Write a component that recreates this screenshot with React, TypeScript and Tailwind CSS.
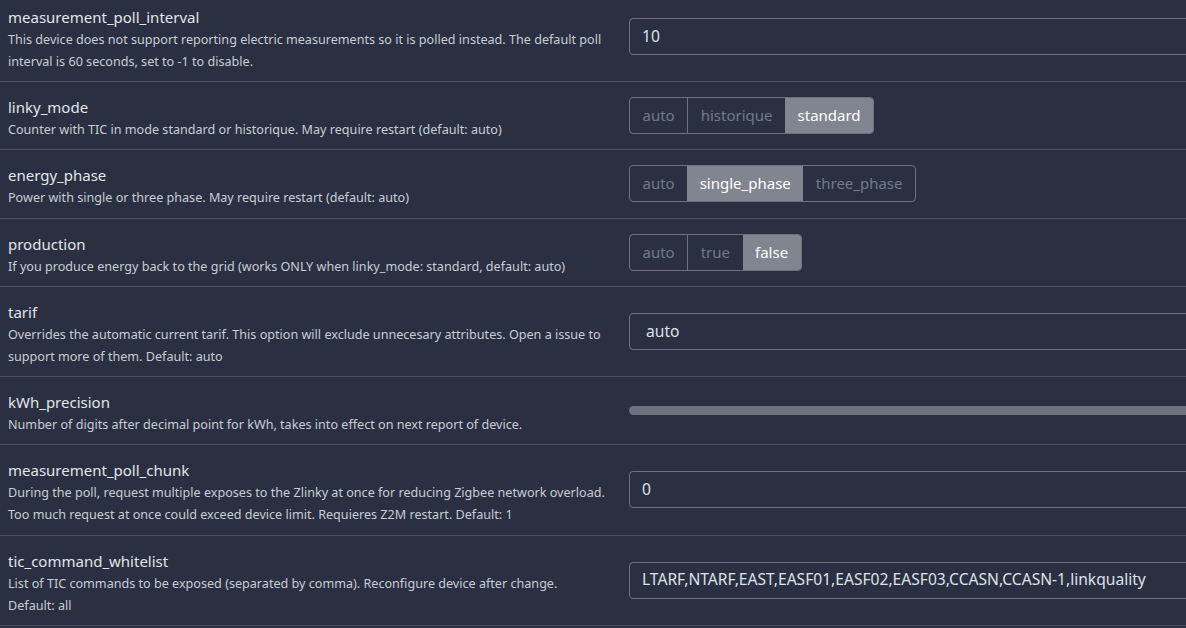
type Control =
  | { kind: "input"; value: string }
  | { kind: "select"; value: string }
  | { kind: "range" }
  | { kind: "toggle"; options: string[]; active: string };

interface Setting {
  name: string;
  description: string;
  control: Control;
}

const settings: Setting[] = [
  {
    name: "measurement_poll_interval",
    description:
      "This device does not support reporting electric measurements so it is polled instead. The default poll interval is 60 seconds, set to -1 to disable.",
    control: { kind: "input", value: "10" },
  },
  {
    name: "linky_mode",
    description: "Counter with TIC in mode standard or historique. May require restart (default: auto)",
    control: { kind: "toggle", options: ["auto", "historique", "standard"], active: "standard" },
  },
  {
    name: "energy_phase",
    description: "Power with single or three phase. May require restart (default: auto)",
    control: { kind: "toggle", options: ["auto", "single_phase", "three_phase"], active: "single_phase" },
  },
  {
    name: "production",
    description: "If you produce energy back to the grid (works ONLY when linky_mode: standard, default: auto)",
    control: { kind: "toggle", options: ["auto", "true", "false"], active: "false" },
  },
  {
    name: "tarif",
    description:
      "Overrides the automatic current tarif. This option will exclude unnecesary attributes. Open a issue to support more of them. Default: auto",
    control: { kind: "select", value: "auto" },
  },
  {
    name: "kWh_precision",
    description: "Number of digits after decimal point for kWh, takes into effect on next report of device.",
    control: { kind: "range" },
  },
  {
    name: "measurement_poll_chunk",
    description:
      "During the poll, request multiple exposes to the Zlinky at once for reducing Zigbee network overload. Too much request at once could exceed device limit. Requieres Z2M restart. Default: 1",
    control: { kind: "input", value: "0" },
  },
  {
    name: "tic_command_whitelist",
    description:
      "List of TIC commands to be exposed (separated by comma). Reconfigure device after change. Default: all",
    control: { kind: "input", value: "LTARF,NTARF,EAST,EASF01,EASF02,EASF03,CCASN,CCASN-1,linkquality" },
  },
];

function ToggleGroup({ options, active }: { options: string[]; active: string }) {
  return (
    <div className="flex h-[37px] rounded-[4px] border border-[#6c717d] overflow-hidden">
      {options.map((o, i) => (
        <button
          key={o}
          className={
            o === active
              ? "px-[12.5px] text-[15px] leading-none bg-[#81858f] text-white"
              : i > 0 && options[i - 1] !== active
                ? "px-[12.5px] text-[15px] leading-none text-[#6f7a87] border-l border-[#6c717d]"
                : "px-[12.5px] text-[15px] leading-none text-[#6f7a87]"
          }
        >
          {o}
        </button>
      ))}
    </div>
  );
}

function SettingControl({ control }: { control: Control }) {
  if (control.kind === "toggle") return <ToggleGroup options={control.options} active={control.active} />;
  if (control.kind === "range")
    return <div className="h-[9px] w-full rounded-full bg-[#6b717e]" />;
  if (control.kind === "select")
    return (
      <div className="flex h-[37px] w-full items-center rounded-[4px] border border-[#6c717d] pl-4 text-[15.6px] text-[#dee2e6]">
        {control.value}
      </div>
    );
  return (
    <div className="flex h-[37px] w-full items-center rounded-[4px] border border-[#6c717d] pl-3 text-[15.6px] text-[#dee2e6]">
      {control.value}
    </div>
  );
}

export default function App() {
  return (
    <div
      className="h-[628px] w-full overflow-hidden bg-[#2a3042]"
      style={{ fontFamily: '"Noto Sans", sans-serif' }}
    >
      <div className="-mt-[8.25px] w-[1320px]">
        {settings.map((s) => (
          <div key={s.name} className="grid grid-cols-[621px_1fr] border-b border-[#4b5162]">
            <div className="pl-2 pr-[15px] pt-[13px] pb-[8.25px]">
              <div className="text-[15px] leading-[24px] text-[#e2e5e9]">{s.name}</div>
              <div className="text-[12.6px] leading-[22px] text-[#c9cdd3]">{s.description}</div>
            </div>
            <div className="flex items-center px-2">
              <SettingControl control={s.control} />
            </div>
          </div>
        ))}
      </div>
    </div>
  );
}
